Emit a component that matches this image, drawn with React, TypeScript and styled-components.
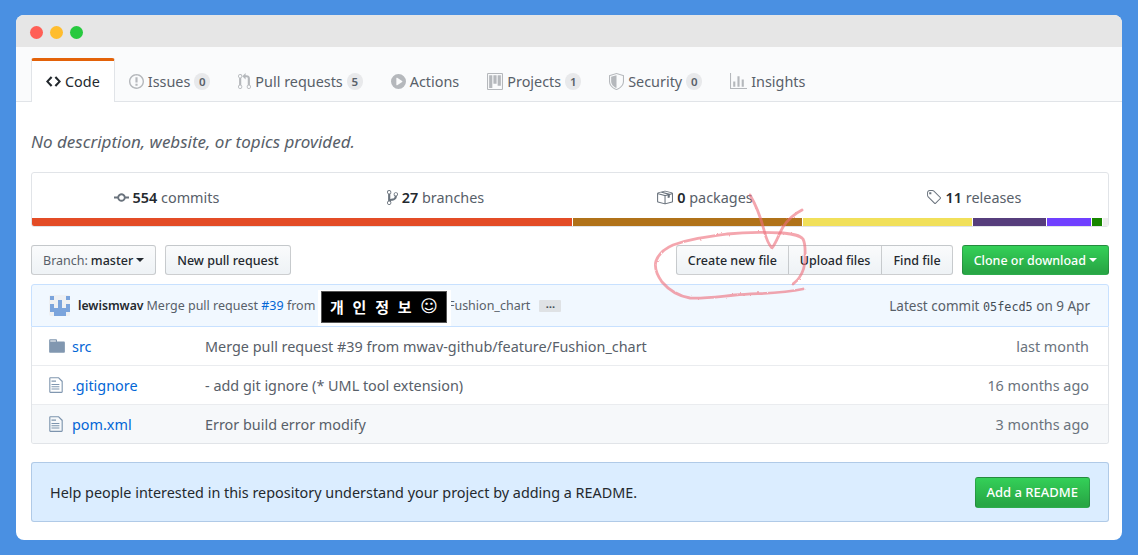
import React from "react";
import styled, { createGlobalStyle } from "styled-components";

const Global = createGlobalStyle`
  html, body { margin: 0; padding: 0; background: #4a90e2; }
  body { font-family: "Noto Sans", "Open Sans", "Noto Sans CJK KR", sans-serif; font-size: 14.4px; color: #24292e; }
  * { box-sizing: border-box; }
`;

const Page = styled.div`
  width: 1138px;
  height: 555px;
  padding: 15px 16px;
  overflow: hidden;
`;
const Window = styled.div`
  position: relative;
  width: 1106px;
  height: 525px;
  background: #fff;
  border-radius: 8px;
  overflow: hidden;
`;
const TitleBar = styled.div`
  height: 32px;
  background: #e6e6e6;
  display: flex;
  align-items: center;
  gap: 7px;
  padding-left: 14px;
  padding-top: 2px;
`;
const Dot = styled.span<{ $c: string }>`
  width: 13px;
  height: 13px;
  border-radius: 50%;
  background: ${(p) => p.$c};
`;
const TabStrip = styled.nav`
  height: 55px;
  background: #fafbfc;
  border-bottom: 1px solid #e1e4e8;
  padding: 11px 0 0 15px;
  display: flex;
  align-items: stretch;
`;
const Tab = styled.div<{ $active?: boolean }>`
  display: flex;
  align-items: center;
  gap: 4px;
  height: 44px;
  padding: 0 14px;
  white-space: nowrap;
  color: ${(p) => (p.$active ? "#24292e" : "#586069")};
  background: ${(p) => (p.$active ? "#fff" : "transparent")};
  border: 1px solid ${(p) => (p.$active ? "#e1e4e8" : "transparent")};
  border-width: ${(p) => (p.$active ? "0 1px" : "0")};
  border-top: ${(p) => (p.$active ? "3px solid #e36209" : "0")};
  border-radius: ${(p) => (p.$active ? "3px 3px 0 0" : "0")};
  padding-top: ${(p) => (p.$active ? "0" : "3px")};
  & > svg { fill: ${(p) => (p.$active ? "#24292e" : "#b5b8bc")}; }
`;
const Counter = styled.span`
  min-width: 16px;
  height: 17px;
  padding: 0 4px;
  border-radius: 9px;
  background: rgba(27, 31, 35, 0.08);
  color: #586069;
  font-size: 11.5px;
  font-weight: 600;
  display: inline-flex;
  align-items: center;
  justify-content: center;
`;
const Content = styled.div`
  padding: 0 13px 0 15px;
`;
const Description = styled.div`
  height: 70px;
  padding-top: 28px;
  font-size: 17px;
  line-height: 24px;
  font-style: italic;
  color: #586069;
`;
const Numbers = styled.div`
  border: 1px solid #e1e4e8;
  border-radius: 3px;
  height: 55px;
  overflow: hidden;
  display: flex;
  flex-direction: column;
`;
const Summary = styled.div`
  height: 45px;
  display: grid;
  grid-template-columns: repeat(4, 1fr);
`;
const SummaryItem = styled.div`
  display: flex;
  align-items: center;
  justify-content: center;
  gap: 4px;
  color: #586069;
  padding-top: 3px;
  white-space: pre;
  & > svg { fill: #6a737d; }
  & b { color: #24292e; font-weight: 600; }
`;
const LangBar = styled.div`
  display: flex;
  height: 8px;
  gap: 1px;
  background: #fff;
`;
const Lang = styled.span<{ $w: number; $c: string }>`
  width: ${(p) => p.$w}px;
  flex: none;
  background: ${(p) => p.$c};
`;
const Toolbar = styled.div`
  display: flex;
  align-items: center;
  margin-top: 18px;
  height: 30px;
  gap: 9px;
`;
const Spacer = styled.div`
  flex: 1;
`;
const Btn = styled.div`
  height: 30px;
  padding: 0 11px;
  display: inline-flex;
  align-items: center;
  gap: 3px;
  font-size: 12.5px;
  font-weight: 500;
  white-space: nowrap;
  color: #24292e;
  background: linear-gradient(-180deg, #fafbfc, #eff3f6 90%);
  border: 1px solid rgba(27, 31, 35, 0.2);
  border-radius: 3px;
`;
const Muted = styled.span`
  color: #586069;
  font-weight: 400;
`;
const Group = styled.div`
  display: flex;
  & > ${Btn} { border-radius: 0; margin-left: -1px; }
  & > ${Btn}:first-child { border-radius: 3px 0 0 3px; margin-left: 0; }
  & > ${Btn}:last-child { border-radius: 0 3px 3px 0; }
`;
const GreenBtn = styled(Btn)`
  color: #fff;
  background: linear-gradient(-180deg, #34d058, #28a745 90%);
  border-color: rgba(27, 31, 35, 0.2);
`;
const Caret = styled.i<{ $c?: string }>`
  display: inline-block;
  width: 0;
  height: 0;
  border: 4px solid transparent;
  border-top-color: ${(p) => p.$c || "#24292e"};
  border-bottom-width: 0;
`;
const CommitBar = styled.div`
  margin-top: 9px;
  height: 43px;
  display: flex;
  align-items: center;
  padding: 0 18px 0 17px;
  background: #f1f8ff;
  border: 1px solid #c8e1ff;
  border-radius: 3px 3px 0 0;
  font-size: 12.5px;
  color: #586069;
  white-space: pre;
`;
const Avatar = styled.svg`
  width: 21px;
  height: 21px;
  margin-right: 8px;
  flex: none;
`;
const Author = styled.span`
  color: #24292e;
  font-size: 12.2px;
  font-weight: 600;
  margin-right: 3px;
`;
const Link = styled.span`
  color: #0366d6;
`;
const Ellipsis = styled.span`
  display: inline-flex;
  justify-content: center;
  align-items: flex-start;
  margin-left: 9px;
  width: 22px;
  height: 12px;
  line-height: 7px;
  font-size: 11px;
  font-weight: 700;
  color: #444d56;
  background: #dfe2e5;
  border-radius: 1px;
`;
const LatestCommit = styled.span`
  font-size: 13.5px;
`;
const Mono = styled.code`
  font-family: "DejaVu Sans Mono", "Liberation Mono", monospace;
  font-size: 11.8px;
  color: #444d56;
`;
const Files = styled.div`
  border: 1px solid #e1e4e8;
  border-top: 0;
  border-radius: 0 0 3px 3px;
  overflow: hidden;
`;
const FileRow = styled.div<{ $alt?: boolean }>`
  height: 39px;
  display: grid;
  grid-template-columns: 23px 133px 1fr auto;
  align-items: center;
  padding: 0 19px 0 17px;
  background: ${(p) => (p.$alt ? "#f6f8fa" : "#fff")};
  border-top: 1px solid #eaecef;
  &:first-child { border-top: 0; height: 38px; }
`;
const FileIcon = styled.svg`
  display: block;
  fill: rgba(3, 47, 98, 0.5);
`;
const FileName = styled.span`
  color: #0366d6;
`;
const Message = styled.span`
  color: #586069;
`;
const Age = styled.span`
  color: #6a737d;
`;
const Callout = styled.div`
  margin-top: 18px;
  height: 60px;
  display: flex;
  align-items: center;
  justify-content: space-between;
  padding: 0 18px;
  background: #dbedff;
  border: 1px solid rgba(4, 66, 137, 0.2);
  border-radius: 3px;
  color: #24292e;
`;
const ReadmeBtn = styled(GreenBtn)`
  height: 31px;
  font-size: 13px;
`;
const Censor = styled.div`
  position: absolute;
  left: 302px;
  top: 275px;
  width: 133px;
  height: 36px;
  padding: 1px 4px 0 3px;
  background: #fff;
`;
const CensorInner = styled.div`
  height: 32px;
  background: #000;
  border: 1px solid #555;
  padding: 0 8px 2px 8px;
  color: #fff;
  font-family: "Noto Sans CJK KR", sans-serif;
  font-weight: 700;
  font-size: 15px;
  display: flex;
  align-items: center;
  justify-content: space-between;
  white-space: pre;
`;
const Smiley = styled.span`
  font-family: "DejaVu Sans", sans-serif;
  font-weight: 400;
  font-size: 17px;
`;
const Scribble = styled.svg`
  position: absolute;
  left: -16px;
  top: -15px;
  width: 1138px;
  height: 555px;
  pointer-events: none;
`;

type IconProps = { w: number; vw: number; d: string };
const Ico = ({ w, vw, d }: IconProps) => (
  <svg width={w} height={17} viewBox={`0 0 ${vw} 16`} preserveAspectRatio="none">
    <path fillRule="evenodd" d={d} />
  </svg>
);

const P = {
  code: "M9.5 3L8 4.5 11.5 8 8 11.5 9.5 13 14 8 9.5 3zm-5 0L0 8l4.5 5L6 11.5 2.5 8 6 4.5 4.5 3z",
  issue: "M7 2.3c3.14 0 5.7 2.56 5.7 5.7s-2.56 5.7-5.7 5.7A5.71 5.71 0 011.3 8c0-3.14 2.56-5.7 5.7-5.7zM7 1C3.14 1 0 4.14 0 8s3.14 7 7 7 7-3.14 7-7-3.14-7-7-7zm1 3H6v5h2V4zm0 6H6v2h2v-2z",
  pr: "M11 11.28V5c-.03-.78-.34-1.47-.94-2.06C9.46 2.35 8.78 2.03 8 2H7V0L4 3l3 3V4h1c.27.02.48.11.69.31.21.2.3.42.31.69v6.28A1.993 1.993 0 0010 15a1.993 1.993 0 001-3.72zm-1 2.92c-.66 0-1.2-.55-1.2-1.2 0-.65.55-1.2 1.2-1.2.65 0 1.2.55 1.2 1.2 0 .65-.55 1.2-1.2 1.2zM4 3c0-1.11-.89-2-2-2a1.993 1.993 0 00-1 3.72v6.56A1.993 1.993 0 002 15a1.993 1.993 0 001-3.72V4.72c.59-.34 1-.98 1-1.72zm-.8 10c0 .66-.55 1.2-1.2 1.2-.65 0-1.2-.55-1.2-1.2 0-.65.55-1.2 1.2-1.2.65 0 1.2.55 1.2 1.2zM2 4.2C1.34 4.2.8 3.65.8 3c0-.65.55-1.2 1.2-1.2.65 0 1.2.55 1.2 1.2 0 .65-.55 1.2-1.2 1.2z",
  play: "M14 8A7 7 0 110 8a7 7 0 0114 0zm-8.223 3.482l4.599-3.066a.5.5 0 000-.832L5.777 4.518A.5.5 0 005 4.934v6.132a.5.5 0 00.777.416z",
  project: "M10 12h3V2h-3v10zm-4-2h3V2H6v8zm-4 4h3V2H2v12zm-1 1h13V1H1v14zM14 0H1a1 1 0 00-1 1v14a1 1 0 001 1h13a1 1 0 001-1V1a1 1 0 00-1-1z",
  shield: "M0 2l7-2 7 2v6.02C14 12.69 8.69 16 7 16c-1.69 0-7-3.31-7-7.98V2zm1 .75L7 1l6 1.75v5.268C13 12.104 8.449 15 7 15c-1.449 0-6-2.896-6-6.982V2.75zm1 .75L7 2v12c-1.207 0-5-2.482-5-5.985V3.5z",
  graph: "M16 14v1H0V0h1v14h15zM5 13H3V8h2v5zm4 0H7V3h2v10zm4 0h-2V6h2v7z",
  commit: "M10.86 7c-.45-1.72-2-3-3.86-3-1.86 0-3.41 1.28-3.86 3H0v2h3.14c.45 1.72 2 3 3.86 3 1.86 0 3.41-1.28 3.86-3H14V7h-3.14zM7 10.2c-1.22 0-2.2-.98-2.2-2.2 0-1.22.98-2.2 2.2-2.2 1.22 0 2.2.98 2.2 2.2 0 1.22-.98 2.2-2.2 2.2z",
  branch: "M10 5c0-1.11-.89-2-2-2a1.993 1.993 0 00-1 3.72v.3c-.02.52-.23.98-.63 1.38-.4.4-.86.61-1.38.63-.83.02-1.48.16-2 .45V4.72a1.993 1.993 0 00-1-3.72C.88 1 0 1.89 0 3a2 2 0 001 1.72v6.56c-.59.35-1 .99-1 1.72 0 1.11.89 2 2 2 1.11 0 2-.89 2-2 0-.53-.2-1-.53-1.36.09-.06.48-.41.59-.47.25-.11.56-.17.94-.17 1.05-.05 1.95-.45 2.75-1.25S8.95 7.77 9 6.73h-.02C9.59 6.37 10 5.73 10 5zM2 1.8c.66 0 1.2.55 1.2 1.2 0 .65-.55 1.2-1.2 1.2C1.35 4.2.8 3.65.8 3c0-.65.55-1.2 1.2-1.2zm0 12.41c-.66 0-1.2-.55-1.2-1.2 0-.65.55-1.2 1.2-1.2.65 0 1.2.55 1.2 1.2 0 .65-.55 1.2-1.2 1.2zm6-8c-.66 0-1.2-.55-1.2-1.2 0-.65.55-1.2 1.2-1.2.65 0 1.2.55 1.2 1.2 0 .65-.55 1.2-1.2 1.2z",
  pkg: "M1 4.27v7.47c0 .45.3.84.75.97l6.5 1.73c.16.05.34.05.5 0l6.5-1.73c.45-.13.75-.52.75-.97V4.27c0-.45-.3-.84-.75-.97l-6.5-1.74a1.4 1.4 0 00-.5 0L1.75 3.3c-.45.13-.75.52-.75.97zm7 9.09l-6-1.59V5l6 1.61v6.75zM2 4l2.5-.67L11 5.06l-2.5.67L2 4zm13 7.77l-6 1.59V6.61l2-.55V8.5l2-.53V5.53L15 5v6.77zm-2-7.24L6.5 2.8l2-.53L15 4l-2 .53z",
  tag: "M7.73 1.73C7.26 1.26 6.62 1 5.96 1H3.5C2.13 1 1 2.13 1 3.5v2.47c0 .66.27 1.3.73 1.77l6.06 6.06c.39.39 1.02.39 1.41 0l4.59-4.59a.996.996 0 000-1.41L7.73 1.73zM2.38 7.09c-.31-.3-.47-.7-.47-1.13V3.5c0-.88.72-1.59 1.59-1.59h2.47c.42 0 .83.16 1.13.47l6.14 6.13-4.73 4.73-6.13-6.15zM3.01 3h2v2H3V3h.01z",
  dir: "M13 4H7V3c0-.66-.31-1-1-1H1c-.55 0-1 .45-1 1v10c0 .55.45 1 1 1h12c.55 0 1-.45 1-1V5c0-.55-.45-1-1-1zM6 4H1V3h5v1z",
  file: "M6 5H2V4h4v1zM2 8h7V7H2v1zm0 2h7V9H2v1zm0 2h7v-1H2v1zm10-7.5V14c0 .55-.45 1-1 1H1c-.55 0-1-.45-1-1V2c0-.55.45-1 1-1h7.5L12 4.5zM11 5L8 2H1v12h10V5z",
};

const langs: [number, string][] = [
  [540, "#e34c26"],
  [229, "#b07219"],
  [169, "#f1e05a"],
  [73, "#563d7c"],
  [44, "#7040ff"],
  [10, "#178600"],
  [5, "#ededed"],
];

const identicon = [
  [1, 0, 0, 0, 1],
  [0, 0, 1, 0, 0],
  [1, 0, 1, 0, 1],
  [1, 1, 1, 1, 1],
  [0, 1, 1, 1, 0],
];

const files = [
  { dir: true, name: "src", msg: "Merge pull request #39 from mwav-github/feature/Fushion_chart", age: "last month" },
  { dir: false, name: ".gitignore", msg: "- add git ignore (* UML tool extension)", age: "16 months ago" },
  { dir: false, name: "pom.xml", msg: "Error build error modify", age: "3 months ago", alt: true },
];

export default function App() {
  return (
    <Page>
      <Global />
      <Window>
        <TitleBar>
          <Dot $c="#ff5f56" />
          <Dot $c="#ffbd2e" />
          <Dot $c="#27c93f" />
        </TitleBar>
        <TabStrip>
          <Tab $active><Ico w={15} vw={14} d={P.code} />Code</Tab>
          <Tab><Ico w={15} vw={14} d={P.issue} />Issues<Counter>0</Counter></Tab>
          <Tab><Ico w={13} vw={12} d={P.pr} />Pull requests<Counter>5</Counter></Tab>
          <Tab><Ico w={15} vw={14} d={P.play} />Actions</Tab>
          <Tab><Ico w={16} vw={15} d={P.project} />Projects<Counter>1</Counter></Tab>
          <Tab><Ico w={15} vw={14} d={P.shield} />Security<Counter>0</Counter></Tab>
          <Tab><Ico w={17} vw={16} d={P.graph} />Insights</Tab>
        </TabStrip>
        <Content>
          <Description>No description, website, or topics provided.</Description>
          <Numbers>
            <Summary>
              <SummaryItem><Ico w={15} vw={14} d={P.commit} /><span><b>554</b> commits</span></SummaryItem>
              <SummaryItem><Ico w={11} vw={10} d={P.branch} /><span><b>27</b> branches</span></SummaryItem>
              <SummaryItem><Ico w={17} vw={16} d={P.pkg} /><span><b>0</b> packages</span></SummaryItem>
              <SummaryItem><Ico w={16} vw={15} d={P.tag} /><span><b>11</b> releases</span></SummaryItem>
            </Summary>
            <LangBar>
              {langs.map(([w, c]) => <Lang key={c} $w={w} $c={c} />)}
            </LangBar>
          </Numbers>
          <Toolbar>
            <Btn><Muted>Branch:</Muted> master<Caret /></Btn>
            <Btn>New pull request</Btn>
            <Spacer />
            <Group>
              <Btn>Create new file</Btn>
              <Btn>Upload files</Btn>
              <Btn>Find file</Btn>
            </Group>
            <GreenBtn>Clone or download<Caret $c="#fff" /></GreenBtn>
          </Toolbar>
          <CommitBar>
            <Avatar viewBox="0 0 21 21">
              <rect width="21" height="21" rx="2" fill="#eef0f3" />
              {identicon.flatMap((row, y) =>
                row.map((on, x) =>
                  on ? <rect key={`${x}-${y}`} x={1 + x * 4} y={1 + y * 4} width="4" height="4" fill="#7ba4dc" /> : null
                )
              )}
            </Avatar>
            <Author>lewismwav</Author>
            <span>Merge pull request <Link>#39</Link> from mwav-github/feature/Fushion_chart</span>
            <Ellipsis>…</Ellipsis>
            <Spacer />
            <LatestCommit>Latest commit <Mono>05fecd5</Mono> on 9 Apr</LatestCommit>
          </CommitBar>
          <Files>
            {files.map((f) => (
              <FileRow key={f.name} $alt={f.alt}>
                <FileIcon width={f.dir ? 16 : 14} height={18} viewBox={f.dir ? "0 0 14 16" : "0 0 12 16"}>
                  <path fillRule="evenodd" d={f.dir ? P.dir : P.file} />
                </FileIcon>
                <FileName>{f.name}</FileName>
                <Message>{f.msg}</Message>
                <Age>{f.age}</Age>
              </FileRow>
            ))}
          </Files>
          <Callout>
            <span>Help people interested in this repository understand your project by adding a README.</span>
            <ReadmeBtn>Add a README</ReadmeBtn>
          </Callout>
        </Content>
        <Censor>
          <CensorInner>
            <span>개</span><span>인</span><span>정</span><span>보</span><Smiley>☺</Smiley>
          </CensorInner>
        </Censor>
        <Scribble viewBox="0 0 1138 555">
          <defs>
            <filter id="rough" x="-5%" y="-5%" width="110%" height="110%">
              <feTurbulence type="fractalNoise" baseFrequency="0.35" numOctaves="2" seed="4" />
              <feDisplacementMap in="SourceGraphic" scale="2" />
            </filter>
          </defs>
          <g fill="none" stroke="#ee6f7c" strokeOpacity="0.62" strokeWidth="2.8" strokeLinecap="round" strokeLinejoin="round" filter="url(#rough)">
            <path d="M803 289 C780 294 760 293 735 295 C715 297 700 299 690 298 C678 296 668 289 662 282 C657 275 654 268 656 261 C659 253 666 248 673 245 C690 239 705 237 727 234 C745 232 765 232 783 233 C793 234 800 235 803 239 C806 245 805 252 805 258 C805 268 802 274 799 278 C797 281 795 282 793 284" />
            <path d="M750 195 C756 205 760 215 764 230 C766 238 769 245 772 248 C776 243 779 234 783 227 C787 221 794 214 802 210" />
          </g>
        </Scribble>
      </Window>
    </Page>
  );
}
